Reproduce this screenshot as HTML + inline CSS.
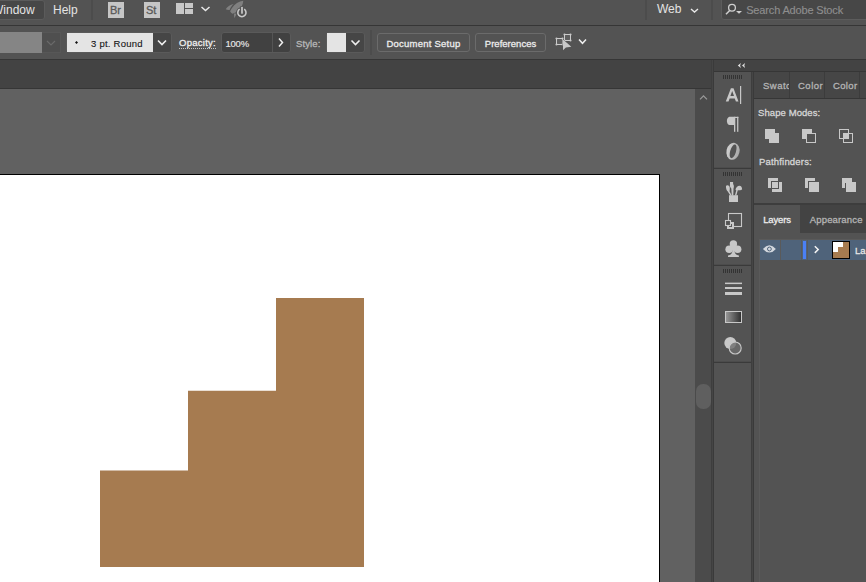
<!DOCTYPE html>
<html><head><meta charset="utf-8">
<style>
*{margin:0;padding:0;box-sizing:border-box}
html,body{width:866px;height:582px;overflow:hidden;background:#535353;font-family:"Liberation Sans",sans-serif;position:relative}
.a{position:absolute}
.t{position:absolute;white-space:nowrap;line-height:1}
svg.a{overflow:hidden}
</style></head><body>
<div class="a" style="left:0px;top:0px;width:866px;height:25px;background:#535353;"></div>
<div class="a" style="left:-10px;top:0px;width:55px;height:20px;background:#474747;border:1px solid #5b5b5b;border-radius:3px"></div>
<div class="t" style="left:-8px;top:4px;font-size:12px;color:#e4e4e4;">Window</div>
<div class="t" style="left:53px;top:4px;font-size:12px;color:#e4e4e4;">Help</div>
<div class="a" style="left:91px;top:0px;width:2px;height:20px;background:#4c4c4c;"></div>
<div class="a" style="left:108px;top:2px;width:16px;height:16px;background:#c6c6c6;"></div>
<div class="t" style="left:110px;top:5px;font-size:11px;color:#585858;;-webkit-text-stroke:0.3px currentColor;">Br</div>
<div class="a" style="left:144px;top:2px;width:16px;height:16px;background:#c6c6c6;"></div>
<div class="t" style="left:146px;top:5px;font-size:11px;color:#585858;;-webkit-text-stroke:0.3px currentColor;">St</div>
<div class="a" style="left:176px;top:3px;width:8px;height:11px;background:#c8c8c8;"></div>
<div class="a" style="left:185px;top:3px;width:8px;height:5px;background:#c8c8c8;"></div>
<div class="a" style="left:185px;top:9px;width:8px;height:5px;background:#c8c8c8;"></div>
<svg class="a" style="left:0px;top:0px" width="866" height="582" viewBox="0 0 866 582"><polyline points="201.5,7 205.5,10.5 209.5,7" fill="none" stroke="#e8e8e8" stroke-width="1.5"/></svg>
<svg class="a" style="left:0px;top:0px" width="866" height="582" viewBox="0 0 866 582"><path d="M243.2,0.8 C239,1.5 234.5,4 232,8 C231,9.5 230.4,10.5 230.2,11.4 C231,12.6 231.8,13.4 232.6,13.8 C236.5,12.5 240,9.5 241.8,6 C242.8,4 243.2,2.5 243.2,0.8 Z" fill="#808080"/><path d="M233.6,4 C230,4.8 227.2,6.8 225.7,9.3 C226.8,9.9 228.4,10.1 229.6,10 C230.5,7.8 231.8,5.6 233.6,4 Z" fill="#808080"/><path d="M234,13.6 L236.6,13.6 C236.2,15.3 235.3,16.8 234.2,17.9 Z" fill="#808080"/><circle cx="241.9" cy="13.1" r="6" fill="#535353"/><path d="M239.6,9.2 A4.1,4.1 0 1 0 244.2,9.2" fill="none" stroke="#c9c9c9" stroke-width="1.6"/><rect x="240.4" y="6" width="3.2" height="8.6" fill="#535353"/><rect x="241.15" y="6.9" width="1.7" height="6.8" fill="#c9c9c9"/></svg>
<div class="a" style="left:645px;top:0px;width:2px;height:20px;background:#4c4c4c;"></div>
<div class="t" style="left:657px;top:3px;font-size:12px;color:#e4e4e4;">Web</div>
<svg class="a" style="left:0px;top:0px" width="866" height="582" viewBox="0 0 866 582"><polyline points="691,9 694.5,12 698,9" fill="none" stroke="#e8e8e8" stroke-width="1.4"/></svg>
<div class="a" style="left:711px;top:0px;width:2px;height:20px;background:#4c4c4c;"></div>
<div class="a" style="left:721px;top:-4px;width:150px;height:24px;background:#474747;border:1px solid #5c5c5c;border-radius:3px"></div>
<svg class="a" style="left:0px;top:0px" width="866" height="582" viewBox="0 0 866 582"><circle cx="732" cy="7.8" r="3.4" fill="none" stroke="#cfcfcf" stroke-width="1.3"/><line x1="726" y1="14.3" x2="729.7" y2="10.4" stroke="#cfcfcf" stroke-width="1.5"/><polygon points="736,11 742,11 739,13.8" fill="#cfcfcf"/></svg>
<div class="t" style="left:746.2px;top:5px;font-size:11px;color:#8e8e8e;;-webkit-text-stroke:0.15px currentColor;;letter-spacing:-0.159px">Search Adobe Stock</div>
<div class="a" style="left:0px;top:25px;width:866px;height:1px;background:#363636;"></div>
<div class="a" style="left:0px;top:26px;width:866px;height:33px;background:#535353;"></div>
<div class="a" style="left:0px;top:32px;width:42px;height:21px;background:#858585;"></div>
<div class="a" style="left:42px;top:32px;width:19px;height:21px;background:#4f4f4f;border:1px solid #575757;border-left:none"></div>
<svg class="a" style="left:0px;top:0px" width="866" height="582" viewBox="0 0 866 582"><polyline points="47,41 51,45 55,41" fill="none" stroke="#6a6a6a" stroke-width="1.2"/></svg>
<div class="a" style="left:66px;top:32px;width:106px;height:21px;background:#464646;border:1px solid #5a5a5a;border-radius:3px"></div>
<div class="a" style="left:67px;top:33px;width:86px;height:19px;background:#e4e4e4;"></div>
<svg class="a" style="left:0px;top:0px" width="866" height="582" viewBox="0 0 866 582"><polygon points="76.5,41 78,42.5 76.5,44 75,42.5" fill="#111"/></svg>
<div class="t" style="left:91.0px;top:39px;font-size:9.5px;color:#141414;;-webkit-text-stroke:0.1px currentColor;;letter-spacing:0.250px">3 pt. Round</div>
<svg class="a" style="left:0px;top:0px" width="866" height="582" viewBox="0 0 866 582"><polyline points="158,40.5 162,44.5 166,40.5" fill="none" stroke="#f0f0f0" stroke-width="1.6"/></svg>
<div class="t" style="left:179.0px;top:38px;font-size:9.5px;color:#eeeeee;border-bottom:1px dotted #c8c8c8;padding-bottom:0;line-height:10px;-webkit-text-stroke:0.3px currentColor;;letter-spacing:0.272px">Opacity:</div>
<div class="a" style="left:221px;top:32px;width:70px;height:21px;background:#414141;border:1px solid #5a5a5a;border-radius:3px"></div>
<div class="a" style="left:272px;top:33px;width:1px;height:19px;background:#555555;"></div>
<div class="t" style="left:225.5px;top:39px;font-size:9.5px;color:#e6e6e6;;-webkit-text-stroke:0.15px currentColor;;letter-spacing:-0.234px">100%</div>
<svg class="a" style="left:0px;top:0px" width="866" height="582" viewBox="0 0 866 582"><polyline points="279,38.5 282.5,42.5 279,46.5" fill="none" stroke="#eeeeee" stroke-width="1.5"/></svg>
<div class="t" style="left:296.0px;top:39px;font-size:9.5px;color:#b8b8b8;;-webkit-text-stroke:0.3px currentColor;;letter-spacing:0.120px">Style:</div>
<div class="a" style="left:326px;top:32px;width:39px;height:21px;background:#464646;border:1px solid #5a5a5a;border-radius:3px"></div>
<div class="a" style="left:327px;top:33px;width:19px;height:19px;background:#e4e4e4;"></div>
<svg class="a" style="left:0px;top:0px" width="866" height="582" viewBox="0 0 866 582"><polyline points="351.5,40.5 355.5,44.5 359.5,40.5" fill="none" stroke="#f0f0f0" stroke-width="1.6"/></svg>
<div class="a" style="left:370px;top:30px;width:2px;height:25px;background:#4c4c4c;"></div>
<div class="a" style="left:377px;top:33px;width:93px;height:19px;background:#535353;border:1px solid #6b6b6b;border-radius:3px"></div>
<div class="t" style="left:386.5px;top:39px;font-size:9.5px;color:#ececec;;-webkit-text-stroke:0.3px currentColor;;letter-spacing:0.231px">Document Setup</div>
<div class="a" style="left:475px;top:33px;width:71px;height:19px;background:#535353;border:1px solid #6b6b6b;border-radius:3px"></div>
<div class="t" style="left:484.8px;top:39px;font-size:9.5px;color:#ececec;;-webkit-text-stroke:0.3px currentColor;;letter-spacing:0.020px">Preferences</div>
<svg class="a" style="left:0px;top:0px" width="866" height="582" viewBox="0 0 866 582"><rect x="556.5" y="38.5" width="6" height="6" fill="#5e5e5e" stroke="#cacaca" stroke-width="1"/><rect x="564.5" y="34.5" width="6" height="6" fill="#5e5e5e" stroke="#cacaca" stroke-width="1"/><circle cx="556.5" cy="38.5" r="1.05" fill="#cacaca"/><circle cx="562.5" cy="38.5" r="1.05" fill="#cacaca"/><circle cx="556.5" cy="44.5" r="1.05" fill="#cacaca"/><circle cx="562.5" cy="44.5" r="1.05" fill="#cacaca"/><circle cx="564.5" cy="34.5" r="1.05" fill="#cacaca"/><circle cx="570.5" cy="34.5" r="1.05" fill="#cacaca"/><circle cx="564.5" cy="40.5" r="1.05" fill="#cacaca"/><circle cx="570.5" cy="40.5" r="1.05" fill="#cacaca"/><polygon points="563,39.6 563,50.2 565.9,47.6 571.3,46.8" fill="#c8c8c8" stroke="#535353" stroke-width="0.8" paint-order="stroke"/></svg>
<svg class="a" style="left:0px;top:0px" width="866" height="582" viewBox="0 0 866 582"><polyline points="579,39.5 582.5,43.3 586,39.5" fill="none" stroke="#eeeeee" stroke-width="1.5"/></svg>
<div class="a" style="left:0px;top:59px;width:866px;height:1px;background:#363636;"></div>
<div class="a" style="left:0px;top:60px;width:711px;height:28px;background:#434343;"></div>
<div class="a" style="left:0px;top:88px;width:711px;height:1px;background:#363636;"></div>
<div class="a" style="left:0px;top:89px;width:695px;height:493px;background:#616161;"></div>
<div class="a" style="left:0px;top:174px;width:660px;height:420px;background:#000;"></div>
<div class="a" style="left:0px;top:175px;width:659px;height:420px;background:#fff;"></div>
<svg class="a" style="left:0px;top:0px" width="866" height="582" viewBox="0 0 866 582"><polygon points="276,298 364,298 364,567 100,567 100,470.6 188,470.6 188,390.8 276,390.8" fill="#a67b50"/></svg>
<div class="a" style="left:695px;top:89px;width:16px;height:493px;background:#4b4b4b;"></div>
<svg class="a" style="left:0px;top:0px" width="866" height="582" viewBox="0 0 866 582"><polyline points="700,99.3 703.5,95.8 707,99.3" fill="none" stroke="#9a9a9a" stroke-width="1.2"/></svg>
<div class="a" style="left:696px;top:384px;width:15px;height:25px;background:#5f5f5f;border-radius:7px"></div>
<div class="a" style="left:711px;top:60px;width:1px;height:522px;background:#3e3e3e;"></div>
<div class="a" style="left:712px;top:60px;width:1px;height:522px;background:#454545;"></div>
<div class="a" style="left:713px;top:60px;width:1px;height:522px;background:#3a3a3a;"></div>
<div class="a" style="left:714px;top:60px;width:152px;height:11px;background:#434343;"></div>
<div class="a" style="left:714px;top:71px;width:152px;height:1px;background:#363636;"></div>
<svg class="a" style="left:0px;top:0px" width="866" height="582" viewBox="0 0 866 582"><polygon points="740.9,62.9 737.8,65.5 740.9,68.1 740.1,65.5" fill="#e0e0e0"/><polygon points="745.1,62.9 742,65.5 745.1,68.1 744.3,65.5" fill="#e0e0e0"/></svg>
<div class="a" style="left:714px;top:72px;width:37px;height:510px;background:#535353;"></div>
<div class="a" style="left:751px;top:72px;width:1px;height:510px;background:#3e3e3e;"></div>
<div class="a" style="left:752px;top:72px;width:1px;height:510px;background:#454545;"></div>
<div class="a" style="left:753px;top:72px;width:1px;height:510px;background:#3a3a3a;"></div>
<div class="a" style="left:714px;top:167px;width:37px;height:1px;background:#4c4c4c;"></div>
<div class="a" style="left:714px;top:168px;width:37px;height:1px;background:#3a3a3a;"></div>
<div class="a" style="left:714px;top:264px;width:37px;height:1px;background:#4c4c4c;"></div>
<div class="a" style="left:714px;top:265px;width:37px;height:1px;background:#3a3a3a;"></div>
<div class="a" style="left:714px;top:361px;width:37px;height:1px;background:#4c4c4c;"></div>
<div class="a" style="left:714px;top:362px;width:37px;height:1px;background:#3a3a3a;"></div>
<svg class="a" style="left:0px;top:0px" width="866" height="582" viewBox="0 0 866 582"><rect x="723" y="75" width="1" height="4" fill="#333"/><rect x="725" y="75" width="1" height="4" fill="#333"/><rect x="727" y="75" width="1" height="4" fill="#333"/><rect x="729" y="75" width="1" height="4" fill="#333"/><rect x="731" y="75" width="1" height="4" fill="#333"/><rect x="733" y="75" width="1" height="4" fill="#333"/><rect x="735" y="75" width="1" height="4" fill="#333"/><rect x="737" y="75" width="1" height="4" fill="#333"/><rect x="739" y="75" width="1" height="4" fill="#333"/><rect x="741" y="75" width="1" height="4" fill="#333"/><rect x="723" y="172" width="1" height="4" fill="#333"/><rect x="725" y="172" width="1" height="4" fill="#333"/><rect x="727" y="172" width="1" height="4" fill="#333"/><rect x="729" y="172" width="1" height="4" fill="#333"/><rect x="731" y="172" width="1" height="4" fill="#333"/><rect x="733" y="172" width="1" height="4" fill="#333"/><rect x="735" y="172" width="1" height="4" fill="#333"/><rect x="737" y="172" width="1" height="4" fill="#333"/><rect x="739" y="172" width="1" height="4" fill="#333"/><rect x="741" y="172" width="1" height="4" fill="#333"/><rect x="723" y="269" width="1" height="4" fill="#333"/><rect x="725" y="269" width="1" height="4" fill="#333"/><rect x="727" y="269" width="1" height="4" fill="#333"/><rect x="729" y="269" width="1" height="4" fill="#333"/><rect x="731" y="269" width="1" height="4" fill="#333"/><rect x="733" y="269" width="1" height="4" fill="#333"/><rect x="735" y="269" width="1" height="4" fill="#333"/><rect x="737" y="269" width="1" height="4" fill="#333"/><rect x="739" y="269" width="1" height="4" fill="#333"/><rect x="741" y="269" width="1" height="4" fill="#333"/></svg>
<div class="a" style="left:754px;top:72px;width:112px;height:26px;background:#464646;"></div>
<div class="a" style="left:789px;top:72px;width:1px;height:26px;background:#3c3c3c;"></div>
<div class="a" style="left:824px;top:72px;width:1px;height:26px;background:#3c3c3c;"></div>
<div class="a" style="left:859px;top:72px;width:1px;height:26px;background:#3c3c3c;"></div>
<div class="t" style="left:763px;top:81px;font-size:9.5px;color:#b4b4b4;width:26px;overflow:hidden;height:12px;-webkit-text-stroke:0.3px currentColor;;letter-spacing:0.500px">Swatch</div>
<div class="a" style="left:789px;top:72px;width:1px;height:26px;background:#3c3c3c;"></div>
<div class="t" style="left:798.0px;top:81px;font-size:9.5px;color:#b4b4b4;;-webkit-text-stroke:0.3px currentColor;;letter-spacing:0.500px">Color</div>
<div class="t" style="left:833.0px;top:81px;font-size:9.5px;color:#b4b4b4;;-webkit-text-stroke:0.3px currentColor;;letter-spacing:0.350px">Color</div>
<div class="a" style="left:754px;top:98px;width:112px;height:1px;background:#363636;"></div>
<div class="a" style="left:754px;top:99px;width:112px;height:104px;background:#535353;"></div>
<div class="t" style="left:758.1px;top:108px;font-size:9.5px;color:#d6d6d6;;-webkit-text-stroke:0.3px currentColor;;letter-spacing:0.074px">Shape Modes:</div>
<div class="t" style="left:759.0px;top:157px;font-size:9.5px;color:#d6d6d6;;-webkit-text-stroke:0.3px currentColor;;letter-spacing:0.182px">Pathfinders:</div>
<div class="a" style="left:754px;top:203px;width:112px;height:2px;background:#3d3d3d;"></div>
<div class="a" style="left:754px;top:205px;width:112px;height:377px;background:#535353;"></div>
<div class="a" style="left:800px;top:205px;width:66px;height:28px;background:#434343;"></div>
<div class="t" style="left:763.2px;top:215px;font-size:9.5px;color:#ececec;;-webkit-text-stroke:0.3px currentColor;;letter-spacing:-0.140px">Layers</div>
<div class="t" style="left:809.8px;top:215px;font-size:9.5px;color:#b4b4b4;;-webkit-text-stroke:0.3px currentColor;;letter-spacing:0.156px">Appearance</div>
<div class="a" style="left:759px;top:239px;width:1px;height:343px;background:#5a5a5a;"></div>
<div class="a" style="left:759px;top:239px;width:107px;height:1px;background:#5a5a5a;"></div>
<div class="a" style="left:760px;top:240px;width:106px;height:20px;background:#4f637a;"></div>
<div class="a" style="left:780px;top:240px;width:1px;height:20px;background:#5a5a5a;"></div>
<div class="a" style="left:801px;top:240px;width:1px;height:20px;background:#5a5a5a;"></div>
<div class="a" style="left:803px;top:241px;width:3px;height:18px;background:#4b80f5;"></div>
<div class="a" style="left:807px;top:240px;width:1px;height:20px;background:#5a5a5a;"></div>
<svg class="a" style="left:0px;top:0px" width="866" height="582" viewBox="0 0 866 582"><path d="M762.9,248.9 Q769.4,241.5 775.9,248.9 Q769.4,256.3 762.9,248.9 Z" fill="#d2d7de"/><circle cx="769.4" cy="249" r="1.9" fill="none" stroke="#4f637a" stroke-width="1"/></svg>
<svg class="a" style="left:0px;top:0px" width="866" height="582" viewBox="0 0 866 582"><polyline points="814.8,246.2 818.2,249.5 814.8,252.9" fill="none" stroke="#f2f2f2" stroke-width="1.5"/></svg>
<div class="a" style="left:832px;top:241px;width:18px;height:18px;background:#000;"></div>
<div class="a" style="left:833px;top:242px;width:16px;height:16px;background:#a67b50;"></div>
<div class="a" style="left:833px;top:242px;width:10px;height:5px;background:#fff;"></div>
<div class="a" style="left:833px;top:247px;width:5px;height:5px;background:#fff;"></div>
<div class="t" style="left:855px;top:246px;font-size:9.5px;color:#e6e6e6;;-webkit-text-stroke:0.3px currentColor;">La</div>
<svg class="a" style="left:0px;top:0px" width="866" height="582" viewBox="0 0 866 582"><path fill-rule="evenodd" fill="#c8c8c8" d="M725.8,101.6 L730.9,88.3 L733.5,88.3 L738.5,101.6 L735.9,101.6 L734.8,98.4 L729.6,98.4 L728.5,101.6 Z M730.4,96.1 L734,96.1 L732.2,91 Z"/><rect x="740" y="86" width="1.2" height="18" fill="#c8c8c8"/></svg>
<svg class="a" style="left:0px;top:0px" width="866" height="582" viewBox="0 0 866 582"><path d="M734.1,116.8 L729.3,116.8 C727.6,117.6 726.9,119 726.9,120.9 C726.9,122.8 727.6,124.2 729.3,125 L734.1,125 Z" fill="#c8c8c8"/><rect x="734" y="116.8" width="1.3" height="15" fill="#c8c8c8"/><rect x="737.1" y="116.8" width="1.25" height="15" fill="#c8c8c8"/><rect x="734" y="116.8" width="4.35" height="1.2" fill="#c8c8c8"/></svg>
<svg class="a" style="left:0px;top:0px" width="866" height="582" viewBox="0 0 866 582"><defs><linearGradient id="og" x1="0" x2="1" y1="0" y2="0"><stop offset="0" stop-color="#d0d0d0"/><stop offset="1" stop-color="#a8a8a8"/></linearGradient></defs><ellipse cx="733" cy="151.3" rx="6.5" ry="8.6" transform="rotate(13 733 151.3)" fill="url(#og)"/><ellipse cx="733.1" cy="151.3" rx="2.9" ry="7.1" transform="rotate(17 733.1 151.3)" fill="#535353"/></svg>
<svg class="a" style="left:0px;top:0px" width="866" height="582" viewBox="0 0 866 582"><rect x="729" y="195.2" width="9" height="6.8" fill="#c8c8c8"/><path d="M726,186 C726.5,184.8 728.5,185 729.5,186.5 C730,188 729.8,190 729.5,191.2 L731.8,195.5 L730.3,195.5 L727.8,191.5 C726.5,190.5 725.8,188 726,186 Z" fill="#c8c8c8"/><path d="M730,182 L733.1,182 L733.1,184 C734,185 734.2,187 733.5,188.5 L733.3,195.5 L731.8,195.5 L731.3,188.5 C730,187.5 729.7,185.5 730,184 Z" fill="#c8c8c8"/><path d="M735.5,190 C735.8,187.5 737.5,185.8 739.5,185.8 C741,185.8 742.2,187.5 742.1,189.5 C740.5,190.3 739,190.5 737.8,190.3 L736.3,195.5 L734.9,195.5 L736.3,190.2 Z" fill="#c8c8c8"/></svg>
<svg class="a" style="left:0px;top:0px" width="866" height="582" viewBox="0 0 866 582"><rect x="728.5" y="213.5" width="13" height="13" fill="none" stroke="#c8c8c8" stroke-width="1.1"/><rect x="727" y="222" width="7" height="7" fill="#c8c8c8"/><rect x="729" y="224" width="3" height="3" fill="#535353"/><rect x="725.5" y="220.5" width="5" height="5" fill="#535353" stroke="#c8c8c8" stroke-width="1.1"/></svg>
<svg class="a" style="left:0px;top:0px" width="866" height="582" viewBox="0 0 866 582"><circle cx="733.4" cy="244" r="3.7" fill="#c8c8c8"/><circle cx="729.2" cy="249.2" r="3.8" fill="#c8c8c8"/><circle cx="737.6" cy="249.2" r="3.8" fill="#c8c8c8"/><rect x="730.5" y="245" width="5.8" height="5" fill="#c8c8c8"/><path d="M732.6,249 L734.3,249 C734.3,252.5 735.5,255 738.9,255.6 L738.9,257 L728,257 L728,255.6 C731.4,255 732.6,252.5 732.6,249 Z" fill="#c8c8c8"/></svg>
<svg class="a" style="left:0px;top:0px" width="866" height="582" viewBox="0 0 866 582"><rect x="725" y="282.6" width="17" height="1.5" fill="#c8c8c8"/><rect x="725" y="287" width="17" height="2" fill="#c8c8c8"/><rect x="725" y="292" width="17" height="3" fill="#c8c8c8"/></svg>
<svg class="a" style="left:0px;top:0px" width="866" height="582" viewBox="0 0 866 582"><defs><linearGradient id="gr" x1="0" x2="1" y1="0" y2="0"><stop offset="0" stop-color="#9a9a9a"/><stop offset="1" stop-color="#2e2e2e"/></linearGradient></defs><rect x="725.5" y="311.5" width="16" height="11" fill="url(#gr)" stroke="#c8c8c8" stroke-width="1"/></svg>
<svg class="a" style="left:0px;top:0px" width="866" height="582" viewBox="0 0 866 582"><circle cx="730.3" cy="343" r="6" fill="#c8c8c8"/><circle cx="735.2" cy="348" r="6" fill="#6e6e6e" fill-opacity="0.8" stroke="#c8c8c8" stroke-width="1.1"/></svg>
<svg class="a" style="left:0px;top:0px" width="866" height="582" viewBox="0 0 866 582"><rect x="765" y="129" width="10" height="10" fill="#c8c8c8"/><rect x="769" y="133" width="10" height="10" fill="#c8c8c8"/><rect x="802" y="129" width="10" height="10" fill="#c8c8c8"/><rect x="806.5" y="133.5" width="9" height="9" fill="#535353" stroke="#c8c8c8" stroke-width="1"/><rect x="839.5" y="129.5" width="9" height="9" fill="none" stroke="#c8c8c8" stroke-width="1"/><rect x="843.5" y="133.5" width="9" height="9" fill="none" stroke="#c8c8c8" stroke-width="1"/><rect x="843" y="133" width="6" height="6" fill="#c8c8c8"/></svg>
<svg class="a" style="left:0px;top:0px" width="866" height="582" viewBox="0 0 866 582"><rect x="768" y="178" width="10" height="10" fill="#c8c8c8"/><rect x="772" y="182" width="10" height="10" fill="#c8c8c8"/><rect x="771.5" y="181.5" width="7" height="7" fill="#c8c8c8" stroke="#535353" stroke-width="1"/><rect x="805" y="178" width="10" height="10" fill="#c8c8c8"/><rect x="808" y="181" width="11" height="11" fill="#535353"/><rect x="809" y="182" width="10" height="10" fill="#c8c8c8"/><rect x="842" y="178" width="10" height="10" fill="#c8c8c8"/><rect x="846" y="182" width="10" height="10" fill="#c8c8c8"/><rect x="845" y="183" width="1" height="5" fill="#535353"/></svg>
</body></html>
